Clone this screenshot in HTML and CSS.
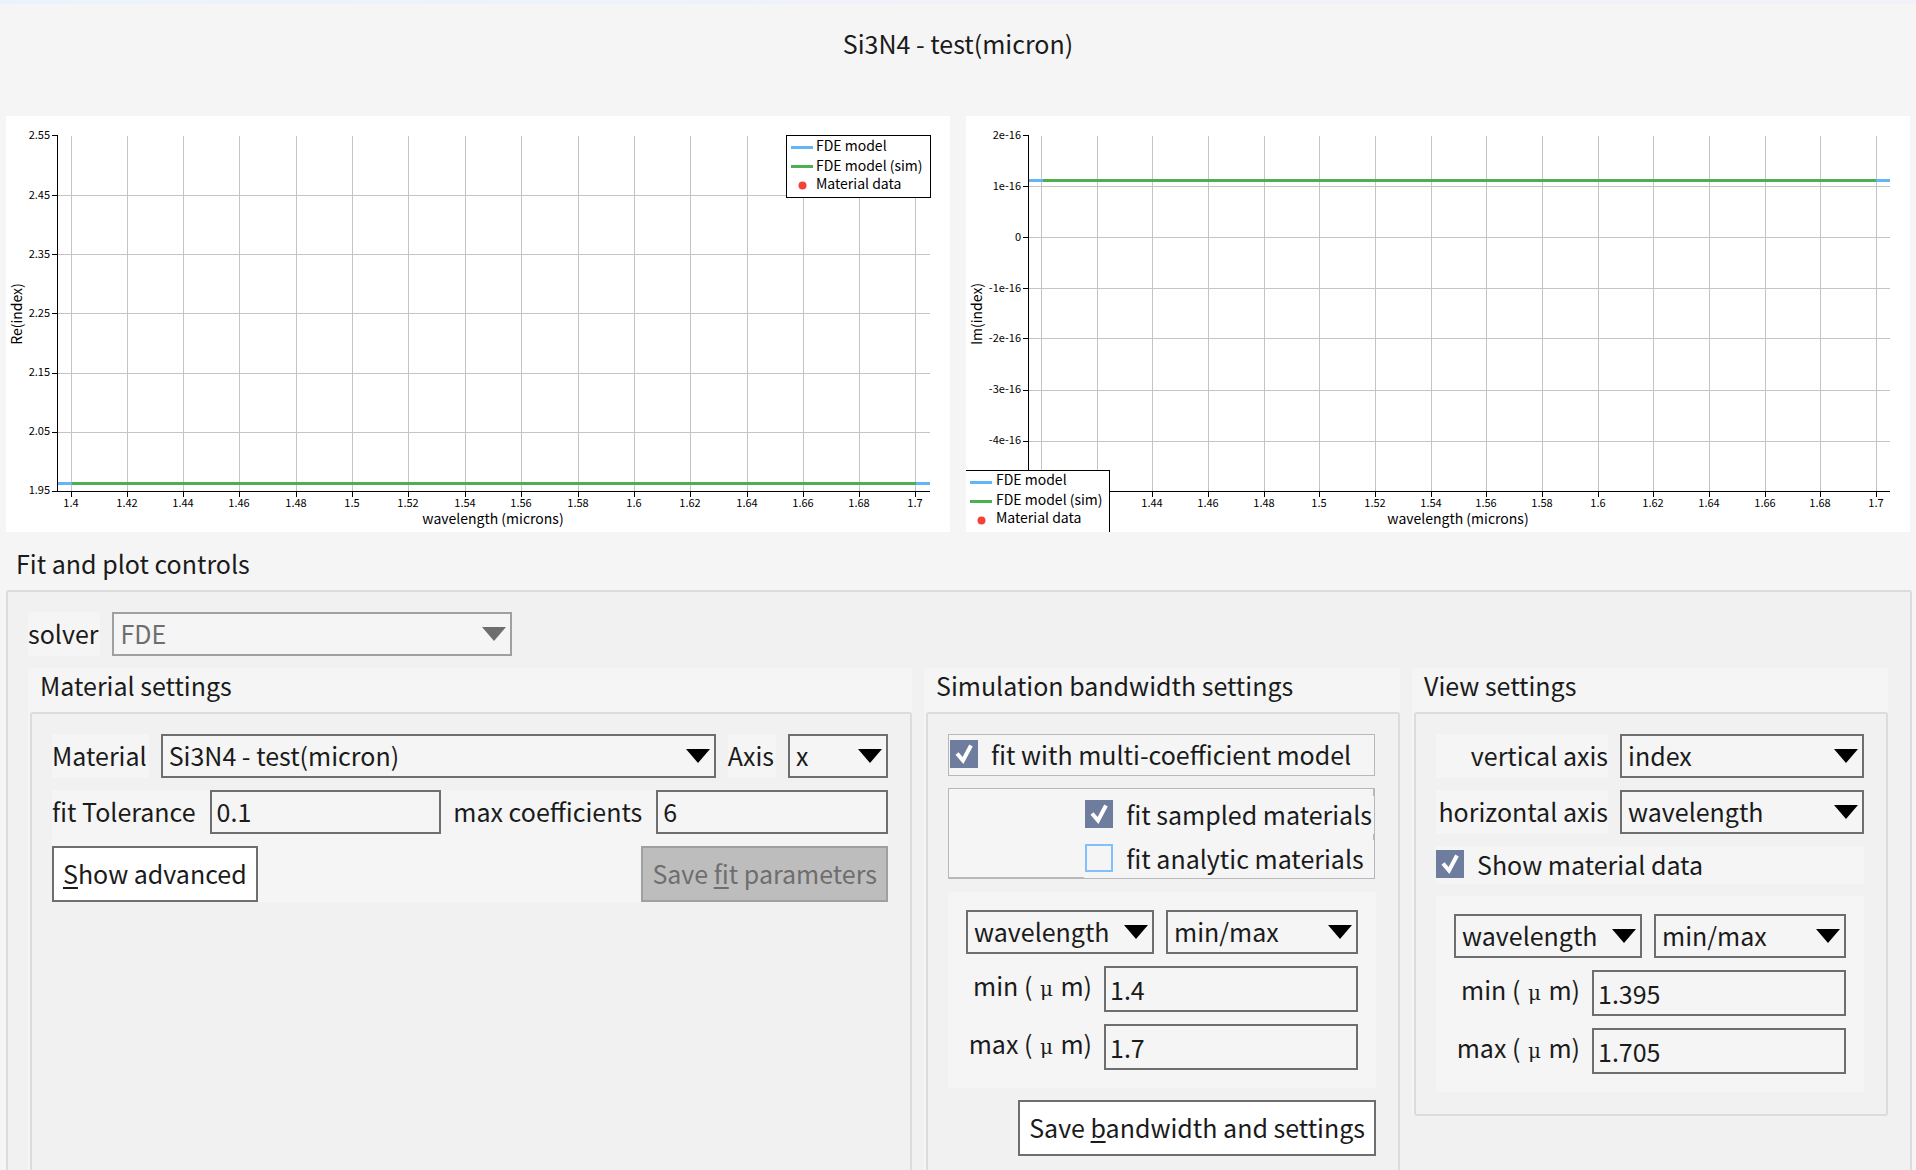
FILE: index.html
```html
<!DOCTYPE html>
<html lang="en">
<head>
<meta charset="utf-8">
<title>Si3N4 - test(micron)</title>
<link rel="stylesheet" href="styles.css">
</head>
<body>
<main class="app">
  <header class="titlebar"><h1 class="title">Si3N4 - test(micron)</h1></header>

  <section class="plots">
    <svg class="plot" viewBox="0 0 944 416" role="img" aria-label="Re(index) against wavelength">
      <path class="grid" d="M65.5 20V375M121.5 20V375M177.5 20V375M233.5 20V375M290.5 20V375M346.5 20V375M402.5 20V375M459.5 20V375M515.5 20V375M572.5 20V375M628.5 20V375M684.5 20V375M741.5 20V375M797.5 20V375M853.5 20V375M909.5 20V375M52 79.5H924M52 138.5H924M52 197.5H924M52 257.5H924M52 316.5H924"/>
      <path class="axis" d="M51.5 19V376M51 375.5H924M46 19.5H52M46 79.5H52M46 138.5H52M46 197.5H52M46 257.5H52M46 316.5H52M46 375.5H52M65.5 375V381M121.5 375V381M177.5 375V381M233.5 375V381M290.5 375V381M346.5 375V381M402.5 375V381M459.5 375V381M515.5 375V381M572.5 375V381M628.5 375V381M684.5 375V381M741.5 375V381M797.5 375V381M853.5 375V381M909.5 375V381"/>
      <path class="curve model" d="M52 367.5H924"/>
      <path class="curve sim" d="M66 367.5H910"/>
      <g class="ticks ticks-y">
        <text x="44" y="23">2.55</text><text x="44" y="83">2.45</text><text x="44" y="142">2.35</text><text x="44" y="201">2.25</text><text x="44" y="260">2.15</text><text x="44" y="319">2.05</text><text x="44" y="378">1.95</text>
      </g>
      <g class="ticks ticks-x">
        <text x="65" y="391">1.4</text><text x="121" y="391">1.42</text><text x="177" y="391">1.44</text><text x="233" y="391">1.46</text><text x="290" y="391">1.48</text><text x="346" y="391">1.5</text><text x="402" y="391">1.52</text><text x="459" y="391">1.54</text><text x="515" y="391">1.56</text><text x="572" y="391">1.58</text><text x="628" y="391">1.6</text><text x="684" y="391">1.62</text><text x="741" y="391">1.64</text><text x="797" y="391">1.66</text><text x="853" y="391">1.68</text><text x="909" y="391">1.7</text>
      </g>
      <text class="axis-title" x="487" y="408">wavelength (microns)</text>
      <text class="axis-title" transform="translate(16 198) rotate(-90)">Re(index)</text>
      <g transform="translate(780 19)">
        <rect class="legend-box" x="0.5" y="0.5" width="144" height="62"/>
        <path class="curve model" d="M5 12.5H27"/><text class="legend-text" x="30" y="16">FDE model</text>
        <path class="curve sim" d="M5 31.5H27"/><text class="legend-text" x="30" y="36">FDE model (sim)</text>
        <circle class="point" cx="16.5" cy="50.5" r="4"/><text class="legend-text" x="30" y="54">Material data</text>
      </g>
    </svg>
    <svg class="plot" viewBox="0 0 944 416" role="img" aria-label="Im(index) against wavelength">
      <path class="grid" d="M75.5 20V375M131.5 20V375M186.5 20V375M242.5 20V375M298.5 20V375M353.5 20V375M409.5 20V375M465.5 20V375M520.5 20V375M576.5 20V375M632.5 20V375M687.5 20V375M743.5 20V375M799.5 20V375M854.5 20V375M910.5 20V375M63 70.5H924M63 121.5H924M63 172.5H924M63 222.5H924M63 274.5H924M63 325.5H924"/>
      <path class="axis" d="M62.5 19V376M62 375.5H924M57 19.5H63M57 70.5H63M57 121.5H63M57 172.5H63M57 222.5H63M57 274.5H63M57 325.5H63M186.5 375V381M242.5 375V381M298.5 375V381M353.5 375V381M409.5 375V381M465.5 375V381M520.5 375V381M576.5 375V381M632.5 375V381M687.5 375V381M743.5 375V381M799.5 375V381M854.5 375V381M910.5 375V381"/>
      <path class="curve model" d="M63 64.5H924"/>
      <path class="curve sim" d="M77 64.5H910"/>
      <g class="ticks ticks-y">
        <text x="55" y="23">2e-16</text><text x="55" y="74">1e-16</text><text x="55" y="125">0</text><text x="55" y="176">-1e-16</text><text x="55" y="226">-2e-16</text><text x="55" y="277">-3e-16</text><text x="55" y="328">-4e-16</text>
      </g>
      <g class="ticks ticks-x">
        <text x="186" y="391">1.44</text><text x="242" y="391">1.46</text><text x="298" y="391">1.48</text><text x="353" y="391">1.5</text><text x="409" y="391">1.52</text><text x="465" y="391">1.54</text><text x="520" y="391">1.56</text><text x="576" y="391">1.58</text><text x="632" y="391">1.6</text><text x="687" y="391">1.62</text><text x="743" y="391">1.64</text><text x="799" y="391">1.66</text><text x="854" y="391">1.68</text><text x="910" y="391">1.7</text>
      </g>
      <text class="axis-title" x="492" y="408">wavelength (microns)</text>
      <text class="axis-title" transform="translate(16 198) rotate(-90)">Im(index)</text>
      <g transform="translate(-1 354)">
        <rect class="legend-box" x="0.5" y="0.5" width="144" height="70"/>
        <path class="curve model" d="M5 12.5H27"/><text class="legend-text" x="31" y="15">FDE model</text>
        <path class="curve sim" d="M5 31.5H27"/><text class="legend-text" x="31" y="35">FDE model (sim)</text>
        <circle class="point" cx="16.5" cy="50.5" r="4"/><text class="legend-text" x="31" y="53">Material data</text>
      </g>
    </svg>
  </section>

  <section class="controls">
    <h2 class="controls-title">Fit and plot controls</h2>
    <div class="panel">
      <div class="row solver-row">
        <label class="tag" for="solver">solver</label>
        <select class="field solver" id="solver" disabled><option>FDE</option></select>
      </div>

      <div class="groups">
        <section class="group">
          <h3 class="group-title">Material settings</h3>
          <div class="group-body">
            <div class="row">
              <label class="tag" for="material">Material</label>
              <select class="field grow" id="material"><option>Si3N4 - test(micron)</option></select>
              <label class="tag" for="axis">Axis</label>
              <select class="field axis-select" id="axis"><option>x</option></select>
            </div>
            <div class="sheet">
              <div class="row">
                <label class="tag" for="tolerance">fit Tolerance</label>
                <input class="field grow" id="tolerance" type="text" value="0.1">
                <label class="tag" for="coefficients">max coefficients</label>
                <input class="field grow" id="coefficients" type="text" value="6">
              </div>
              <div class="row spread">
                <button class="button" type="button"><u>S</u>how advanced</button>
                <button class="button" type="button" disabled>Save <u>f</u>it parameters</button>
              </div>
            </div>
          </div>
        </section>

        <section class="group">
          <h3 class="group-title">Simulation bandwidth settings</h3>
          <div class="group-body">
            <div class="frame">
              <label class="check roomy"><input class="box" type="checkbox" checked>fit with multi-coefficient model</label>
            </div>
            <div class="frame nested">
              <label class="check"><input class="box" type="checkbox" checked>fit sampled materials</label>
              <label class="check"><input class="box" type="checkbox">fit analytic materials</label>
            </div>
            <div class="sheet range">
              <div class="row">
                <select class="field unit" aria-label="bandwidth unit"><option>wavelength</option></select>
                <select class="field grow" aria-label="bandwidth range type"><option>min/max</option></select>
              </div>
              <div class="row">
                <label class="range-label" for="bw-min">min (<span class="mu">μ</span>m)</label>
                <input class="field tall" id="bw-min" type="text" value="1.4">
              </div>
              <div class="row">
                <label class="range-label" for="bw-max">max (<span class="mu">μ</span>m)</label>
                <input class="field tall" id="bw-max" type="text" value="1.7">
              </div>
            </div>
            <button class="button end" type="button">Save <u>b</u>andwidth and settings</button>
          </div>
        </section>

        <section class="group compact">
          <h3 class="group-title">View settings</h3>
          <div class="group-body">
            <div class="row">
              <label class="tag axis-label" for="v-axis">vertical axis</label>
              <select class="field grow" id="v-axis"><option>index</option></select>
            </div>
            <div class="row">
              <label class="tag axis-label" for="h-axis">horizontal axis</label>
              <select class="field grow" id="h-axis"><option>wavelength</option></select>
            </div>
            <label class="check"><input class="box" type="checkbox" checked>Show material data</label>
            <div class="sheet range">
              <div class="row">
                <select class="field unit" aria-label="view unit"><option>wavelength</option></select>
                <select class="field grow" aria-label="view range type"><option>min/max</option></select>
              </div>
              <div class="row">
                <label class="range-label" for="view-min">min (<span class="mu">μ</span>m)</label>
                <input class="field tall" id="view-min" type="text" value="1.395">
              </div>
              <div class="row">
                <label class="range-label" for="view-max">max (<span class="mu">μ</span>m)</label>
                <input class="field tall" id="view-max" type="text" value="1.705">
              </div>
            </div>
          </div>
        </section>
      </div>
    </div>
  </section>
</main>
</body>
</html>
```
FILE: styles.css
```css
* { box-sizing: border-box; }

html { scrollbar-width: none; }

body {
  margin: 0;
  background: #f5f5f5;
  color: #1b1b1b;
  font: 25px/36px "Noto Sans CJK SC", "Noto Sans", sans-serif;
}

h1, h2, h3 { margin: 0; font-size: inherit; font-weight: 400; }

.titlebar {
  height: 116px;
  padding-top: 21px;
  border-top: 4px solid #f1f1fa;
  border-image: linear-gradient(90deg, #eaf3fb, #f1f1fa 50%) 4;
  text-align: center;
}

/* plots */
.plots { display: grid; grid-template-columns: 1fr 1fr; gap: 16px; padding: 0 6px; }
.plot { display: block; width: 100%; background: #fff; overflow: hidden; }
.grid { fill: none; stroke: #c4c4c4; }
.axis { fill: none; stroke: #000; }
.curve { fill: none; stroke-width: 3; }
.model { stroke: #64b5f6; }
.sim { stroke: #4caf50; }
.point { fill: #f44336; }
.legend-box { fill: #fff; stroke: #000; }
.legend-text, .axis-title { font-size: 14px; fill: #000; }
.axis-title { text-anchor: middle; }
.ticks { font-size: 11px; fill: #000; }
.ticks-y { text-anchor: end; }
.ticks-x { text-anchor: middle; }

/* control panel */
.controls-title { height: 58px; padding: 13px 16px 0; }

.panel {
  display: grid;
  gap: 12px;
  margin: 0 4px 12px 6px;
  padding: 20px 22px 22px 20px;
  border: 2px solid #dcdcdc;
  border-radius: 3px;
  background: #f1f1f1;
}

.groups { display: grid; grid-template-columns: 1fr 476px 476px; gap: 12px; }
.group { display: flex; flex-direction: column; }
.compact { align-self: start; }
.group-title { height: 44px; padding-left: 12px; background: #f5f5f5; line-height: 34px; }

.group-body {
  flex: 1;
  display: flex;
  flex-direction: column;
  gap: 12px;
  margin-left: 2px;
  padding: 20px 22px 22px 20px;
  border: 2px solid #dcdcdc;
  border-radius: 3px;
  box-shadow: -2px 0 #f5f5f5;
}

.row { display: flex; gap: 12px; }
.spread { justify-content: space-between; }
.grow { flex: 1; }
.sheet { display: flex; flex-direction: column; gap: 12px; background: #f5f5f5; }
.range { padding: 18px; }

.tag { padding-right: 2px; line-height: 42px; background: #f5f5f5; white-space: nowrap; }
.axis-label { width: 172px; padding-right: 0; text-align: right; }
.range-label { flex: 1; line-height: 38px; text-align: right; white-space: nowrap; }
.mu { display: inline-block; width: 28px; text-align: center; font-family: "DejaVu Serif", serif; font-size: 20px; }

.field {
  min-width: 0;
  width: 0;
  height: 44px;
  margin: 0;
  padding: 0 5px 2px;
  border: 2px solid #6e6e6e;
  border-radius: 0;
  background: #f5f5f5;
  color: inherit;
  font: inherit;
  appearance: none;
}

select.field {
  padding-left: 6px;
  background: #f5f5f5 url("data:image/svg+xml,%3Csvg xmlns='http://www.w3.org/2000/svg' width='24' height='14'%3E%3Cpath d='M0 0H24L12 14Z'/%3E%3C/svg%3E") no-repeat right 4px top 13px;
}

select.field:disabled {
  border-color: #a0a0a0;
  background-image: url("data:image/svg+xml,%3Csvg xmlns='http://www.w3.org/2000/svg' width='24' height='14'%3E%3Cpath fill='%236e6e6e' d='M0 0H24L12 14Z'/%3E%3C/svg%3E");
  color: #6e6e6e;
  opacity: 1;
}

.field.solver { width: 400px; }
.field.axis-select { width: 100px; }
.field.unit { width: 188px; }
.field.tall { width: 254px; height: 46px; padding: 0 4px; }

.button {
  height: 56px;
  padding: 0 9px 2px;
  border: 2px solid #6e6e6e;
  background: #fff;
  color: inherit;
  font: inherit;
  white-space: nowrap;
}
.button:disabled { border-color: #a0a0a0; background: #bdbdbd; color: #6e6e6e; }
.button u { text-decoration-thickness: 2px; text-underline-offset: 3px; }
.end { align-self: flex-end; }

/* tick boxes */
.check {
  display: flex;
  align-items: center;
  gap: 13px;
  height: 38px;
  padding-bottom: 2px;
  background: #f5f5f5;
  white-space: nowrap;
}
.roomy { height: 40px; }

.frame { display: grid; margin-right: 1px; border: 1px solid #b8b8b8; background: #f5f5f5; }
.frame > .check { padding-left: 1px; }
.nested {
  justify-content: end;
  gap: 6px;
  margin-bottom: 1px;
  padding-top: 7px;
  box-shadow: inset -1px -1px #b8b8b8;
}
.nested > .check { padding-right: 2px; }

.box {
  flex: none;
  width: 28px;
  height: 28px;
  margin: 0;
  border: 2px solid #80c0ff;
  background: #f5f5f5;
  appearance: none;
}
.box:checked {
  border: 0;
  background: #6e7c9d url("data:image/svg+xml,%3Csvg xmlns='http://www.w3.org/2000/svg' width='28' height='28'%3E%3Cpath d='M7 13.5L13 20.5L21 5.5' fill='none' stroke='%23fff' stroke-width='4'/%3E%3C/svg%3E");
}
```
